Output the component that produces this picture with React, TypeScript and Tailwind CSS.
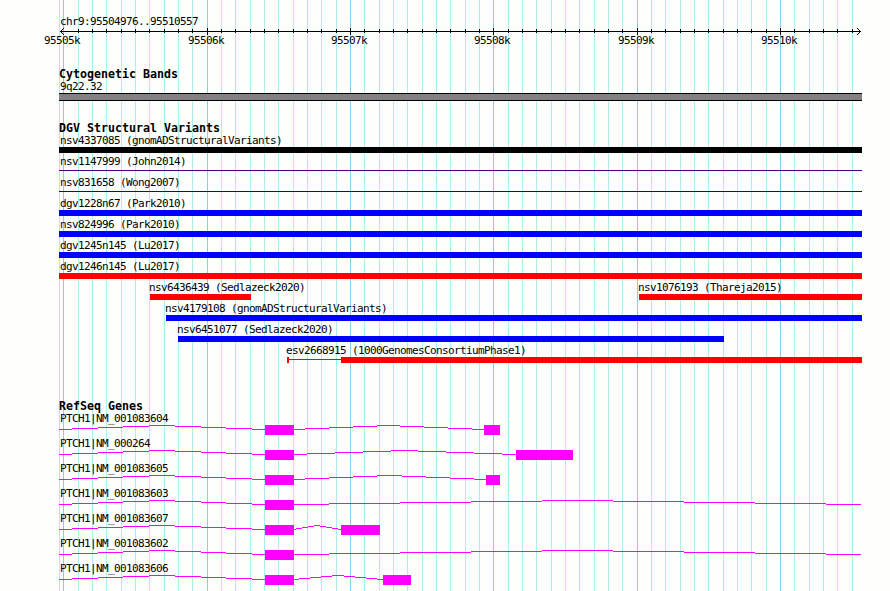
const LEFT = 59;
const RIGHT = 862;

type Segment = { start: number; end: number; thin?: boolean };

type Feature = {
    id: string;
    start: number;
    end: number;
    color: string;
    segments?: Segment[];
};

type Gene = {
    id: string;
    exons: [number, number][];
    introns: [number, number][];
};

const MAJOR_LINES = [63, 207, 350, 493, 637, 780];
const MINOR_LINES = [
    59, 78, 92, 106, 121, 135, 149, 164, 178, 192,
    221, 235, 250, 264, 278, 293, 307, 321, 336,
    364, 379, 393, 407, 422, 436, 450, 465, 479,
    508, 522, 536, 551, 565, 579, 594, 608, 622,
    651, 665, 680, 694, 708, 723, 737, 751, 766,
    794, 809, 823, 837, 852,
];

const AXIS_LABELS = ["95505k", "95506k", "95507k", "95508k", "95509k", "95510k"];

const full = (id: string, color: string, thin = false): Feature => ({
    id,
    start: LEFT,
    end: RIGHT,
    color,
    segments: [{ start: LEFT, end: RIGHT, thin }],
});

const LANES: Feature[][] = [
    [full("nsv4337085 (gnomADStructuralVariants)", "bg-black")],
    [full("nsv1147999 (John2014)", "bg-[#4b0082]", true)],
    [full("nsv831658 (Wong2007)", "bg-[#0000cd]", true)],
    [full("dgv1228n67 (Park2010)", "bg-[#0000ff]")],
    [full("nsv824996 (Park2010)", "bg-[#0000ff]")],
    [full("dgv1245n145 (Lu2017)", "bg-[#0000ff]")],
    [full("dgv1246n145 (Lu2017)", "bg-[#ff0000]")],
    [
        { id: "nsv6436439 (Sedlazeck2020)", start: 150, end: 251, color: "bg-[#ff0000]" },
        { id: "nsv1076193 (Thareja2015)", start: 639, end: RIGHT, color: "bg-[#ff0000]" },
    ],
    [{ id: "nsv4179108 (gnomADStructuralVariants)", start: 166, end: RIGHT, color: "bg-[#0000ff]" }],
    [{ id: "nsv6451077 (Sedlazeck2020)", start: 178, end: 724, color: "bg-[#0000ff]" }],
    [
        {
            id: "esv2668915 (1000GenomesConsortiumPhase1)",
            start: 287,
            end: RIGHT,
            color: "bg-[#ff0000]",
            segments: [
                { start: 287, end: 289 },
                { start: 289, end: 341, thin: true },
                { start: 341, end: RIGHT },
            ],
        },
    ],
];

const GENES: Gene[] = [
    { id: "PTCH1|NM_001083604", exons: [[265, 294], [484, 500]], introns: [[59, 265], [293, 484]] },
    { id: "PTCH1|NM_000264", exons: [[265, 294], [516, 573]], introns: [[59, 265], [293, 516]] },
    { id: "PTCH1|NM_001083605", exons: [[265, 294], [486, 500]], introns: [[59, 265], [293, 486]] },
    { id: "PTCH1|NM_001083603", exons: [[265, 294]], introns: [[59, 265], [293, 861]] },
    { id: "PTCH1|NM_001083607", exons: [[265, 294], [341, 380]], introns: [[59, 265], [293, 341]] },
    { id: "PTCH1|NM_001083602", exons: [[265, 294]], introns: [[59, 265], [293, 861]] },
    { id: "PTCH1|NM_001083606", exons: [[265, 294], [383, 411]], introns: [[59, 265], [293, 383]] },
];

const LABEL = "font-['DejaVu_Sans_Mono',monospace] text-[11px] leading-3 tracking-[-0.622px] whitespace-pre text-black";

// Intron hat: four one-pixel steps up to the middle and four back down.
const intronPath = (start: number, end: number): string => {
    const step = (end - start) / 8;
    let d = "";
    for (let i = 0; i <= 8; i++) {
        const from = i === 0 ? start : Math.round(start + step * (i - 0.5));
        const to = i === 8 ? end : Math.round(start + step * (i + 0.5));
        const y = 0.5 + Math.abs(4 - i);
        d += `M${from - LEFT} ${y}H${to - LEFT}`;
    }
    return d;
};

const GridLines = () => (
    <svg width={890} height={591} className="absolute inset-0" shapeRendering="crispEdges" aria-hidden="true">
        {MINOR_LINES.map((x) => (
            <rect key={x} x={x} y={0} width={1} height={591} fill="#afeeee" />
        ))}
        {MAJOR_LINES.map((x) => (
            <rect key={x} x={x} y={0} width={1} height={591} fill="#87ceeb" />
        ))}
    </svg>
);

const Axis = () => (
    <div className="h-[53px] pt-[15px]">
        <div className={`${LABEL} h-[13px] pt-px pl-[60px]`}>chr9:95504976..95510557</div>
        <svg width={890} height={7} className="block" shapeRendering="crispEdges" aria-hidden="true">
            <rect x={60} y={3} width={801} height={1} />
            {MINOR_LINES.slice(1).map((x) => (
                <rect key={x} x={x} y={1} width={1} height={4} />
            ))}
            {MAJOR_LINES.slice(1).map((x) => (
                <rect key={x} x={x} y={0} width={1} height={7} />
            ))}
            {[1, 2, 3].map((i) => (
                <g key={i}>
                    <rect x={60 + i} y={3 - i} width={1} height={1} />
                    <rect x={60 + i} y={3 + i} width={1} height={1} />
                    <rect x={860 - i} y={3 - i} width={1} height={1} />
                    <rect x={860 - i} y={3 + i} width={1} height={1} />
                </g>
            ))}
        </svg>
        <div className="flex">
            {AXIS_LABELS.map((label, i) => (
                <div
                    key={label}
                    className={`${LABEL} w-9 shrink-0`}
                    style={{ marginLeft: i === 0 ? 44 : MAJOR_LINES[i] - MAJOR_LINES[i - 1] - 36 }}
                >
                    {label}
                </div>
            ))}
        </div>
    </div>
);

const TrackTitle = ({ children }: { children: string }) => (
    <h2 className="h-3 pl-[59px] font-['DejaVu_Sans_Mono',monospace] text-[11.63px] leading-3 font-bold whitespace-pre text-black">
        {children}
    </h2>
);

const FeatureBar = ({ feature, gap }: { feature: Feature; gap: number }) => {
    const segments = feature.segments ?? [{ start: feature.start, end: feature.end, thin: false }];
    return (
        <div className="shrink-0" style={{ marginLeft: gap, width: feature.end - feature.start }}>
            <div className={`${LABEL} h-[13px] pt-px ${feature.start === LEFT ? "pl-px" : "-ml-px"}`}>
                {feature.id}
            </div>
            <div className="flex h-1.5">
                {segments.map((s) => (
                    <div
                        key={s.start}
                        className={`${feature.color} ${s.thin ? "mt-0.5 h-px" : "h-1.5"}`}
                        style={{ width: s.end - s.start }}
                    />
                ))}
            </div>
        </div>
    );
};

const GeneRow = ({ gene }: { gene: Gene }) => (
    <div className="h-[25px] pl-[59px]">
        <div className={`${LABEL} h-[13px] pt-px pl-px`}>{gene.id}</div>
        <svg width={803} height={10} className="block" shapeRendering="crispEdges" aria-hidden="true">
            {gene.introns.map(([start, end]) => (
                <path key={start} d={intronPath(start, end)} stroke="#ff00ff" strokeWidth={1} fill="none" />
            ))}
            {gene.exons.map(([start, end]) => (
                <rect key={start} x={start - LEFT} y={0} width={end - start} height={10} fill="#ff00ff" />
            ))}
        </svg>
    </div>
);

export default function App() {
    return (
        <main className="relative h-[591px] w-[890px] overflow-hidden bg-[#fdfffc]">
            <GridLines />
            <div className="relative flex flex-col">
                <Axis />

                <section className="h-[54px] pt-[15px]">
                    <TrackTitle>Cytogenetic Bands</TrackTitle>
                    <div className={`${LABEL} h-[13px] pt-px pl-[60px]`}>9q22.32</div>
                    <div className="ml-[59px] h-2 w-[803px] border-y border-black bg-[#858083]" />
                </section>

                <section className="h-[278px] pt-[15px]">
                    <TrackTitle>DGV Structural Variants</TrackTitle>
                    {LANES.map((lane) => (
                        <div key={lane[0].id} className="flex h-[21px]">
                            {lane.map((feature, i) => (
                                <FeatureBar
                                    key={feature.id}
                                    feature={feature}
                                    gap={feature.start - (i === 0 ? 0 : lane[i - 1].end)}
                                />
                            ))}
                        </div>
                    ))}
                </section>

                <section className="pt-[15px]">
                    <TrackTitle>RefSeq Genes</TrackTitle>
                    {GENES.map((gene) => (
                        <GeneRow key={gene.id} gene={gene} />
                    ))}
                </section>
            </div>
        </main>
    );
}
